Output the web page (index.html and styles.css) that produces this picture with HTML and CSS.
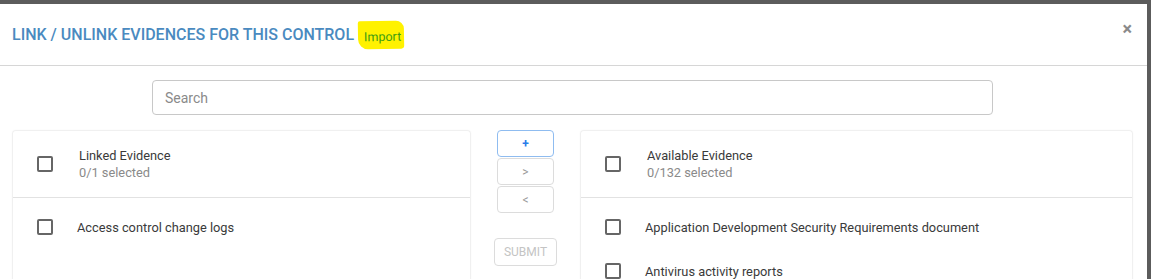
FILE: index.html
```html
<!DOCTYPE html>
<html lang="en">
<head>
    <meta charset="UTF-8">
    <meta name="viewport" content="width=device-width, initial-scale=1.0">
    <title>Link / Unlink Evidences</title>
    <link rel="stylesheet" href="styles.css">
</head>
<body>

<div class="modal">
    <div class="modal-header">
        <h2 class="title">Link / Unlink evidences for this control</h2>
        <span class="import">Import</span>
        <span class="close">&times;</span>
    </div>

    <div class="modal-body">
        <div class="search-row">
            <input class="search" type="text" placeholder="Search">
        </div>

        <div class="transfer">
            <div class="panel left">
                <div class="panel-head">
                    <span class="check"></span>
                    <div>
                        <div class="panel-title">Linked Evidence</div>
                        <div class="panel-count">0/1 selected</div>
                    </div>
                </div>
                <div class="list">
                    <div class="item"><span class="check"></span>Access control change logs</div>
                </div>
            </div>

            <div class="actions">
                <button class="btn add">+</button>
                <button class="btn">&gt;</button>
                <button class="btn">&lt;</button>
                <button class="submit">SUBMIT</button>
            </div>

            <div class="panel right">
                <div class="panel-head">
                    <span class="check"></span>
                    <div>
                        <div class="panel-title">Available Evidence</div>
                        <div class="panel-count">0/132 selected</div>
                    </div>
                </div>
                <div class="list">
                    <div class="item"><span class="check"></span>Application Development Security Requirements document</div>
                    <div class="item"><span class="check"></span>Antivirus activity reports</div>
                </div>
            </div>
        </div>
    </div>
</div>

</body>
</html>
```

FILE: styles.css
```css
body {
    margin: 0;
    height: 279px;
    overflow: hidden;
    background: #5c5c5c;
    font-family: Roboto, "Noto Sans", Arial, sans-serif;
}

.modal {
    margin: 4px 4px 0 0;
    height: 275px;
    background: #fff;
    overflow: hidden;
}

.modal-header {
    display: flex;
    align-items: center;
    height: 61px;
    padding: 0 15px 0 12px;
    border-bottom: 1px solid #d6d6d6;
}

.title {
    margin: 0;
    font-size: 16px;
    font-weight: 500;
    text-transform: uppercase;
    color: #4a8ac0;
    letter-spacing: 0;
}

.import {
    margin: 0 0 0 4px;
    padding: 9px 3px 6px 6px;
    background: #fff200;
    border-radius: 2px 8px 3px 10px;
    font-size: 12.5px;
    line-height: 13px;
    color: #3c9c12;
    transform: rotate(-1deg);
}

.close {
    margin-left: auto;
    align-self: flex-start;
    margin-top: 14px;
    font-size: 18px;
    font-weight: 700;
    color: #8a8a8a;
}

.modal-body {
    padding: 14px 14px 0 12px;
}

.search-row {
    display: flex;
    justify-content: center;
    padding-right: 140px;
    padding-left: 140px;
}

.search {
    flex: 1;
    height: 35px;
    box-sizing: border-box;
    padding: 0 12px;
    border: 1px solid #c8c8c8;
    border-radius: 4px;
    font-family: inherit;
    font-size: 14px;
}

.search::placeholder {
    color: #8a8a8a;
}

.transfer {
    display: flex;
    margin-top: 15px;
}

.panel {
    box-sizing: border-box;
    border: 1px solid #f0f0f0;
    border-bottom: none;
    border-radius: 4px 4px 0 0;
    box-shadow: 0 0 2px rgba(0, 0, 0, 0.04);
    height: 160px;
}

.left {
    width: 459px;
}

.right {
    flex: 1;
}

.panel-head {
    display: flex;
    align-items: center;
    height: 66px;
    padding-left: 24px;
    border-bottom: 1px solid #e2e2e2;
    font-size: 12.8px;
}

.panel-head .check {
    margin-right: 26px;
}

.panel-title {
    color: #3a3a3a;
    line-height: 17px;
}

.panel-count {
    color: #8a8a8a;
    line-height: 17px;
}

.list {
    padding-top: 18px;
}

.item {
    display: flex;
    align-items: center;
    height: 22px;
    margin-bottom: 22px;
    padding-left: 24px;
    font-size: 12.8px;
    color: #3a3a3a;
}

.item .check {
    margin-right: 24px;
}

.check {
    display: inline-block;
    width: 12px;
    height: 12px;
    border: 2px solid #666;
    border-radius: 2px;
    flex-shrink: 0;
}

.actions {
    display: flex;
    flex-direction: column;
    align-items: center;
    width: 109px;
}

.btn {
    width: 57px;
    height: 27px;
    margin-bottom: 1px;
    background: #fff;
    border: 1px solid #dcdcdc;
    border-radius: 4px;
    font-family: inherit;
    font-size: 12px;
    color: #9a9a9a;
}

.btn.add {
    border-color: #8fbcf0;
    color: #2b7de9;
    font-weight: 700;
}

.submit {
    margin-top: 24px;
    width: 63px;
    height: 28px;
    background: #fff;
    border: 1px solid #dcdcdc;
    border-radius: 4px;
    font-family: inherit;
    font-size: 12px;
    color: #c4c4c4;
}
```
